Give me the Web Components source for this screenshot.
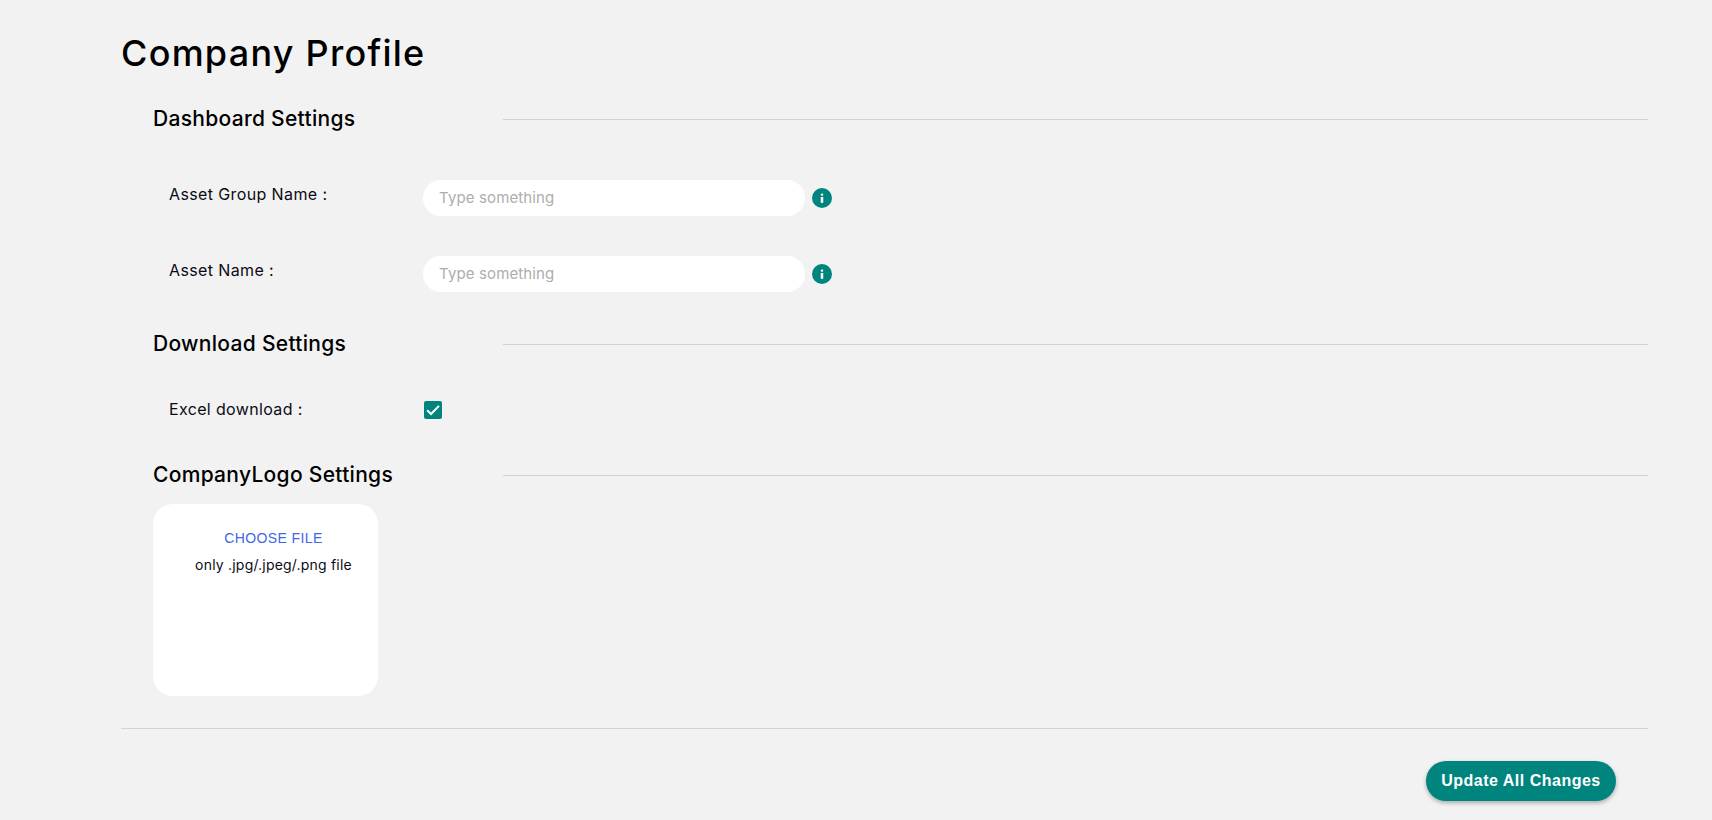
<!DOCTYPE html>
<html lang="en"><head><meta charset="utf-8"><title>Company Profile</title>
<style>html,body{margin:0;background:#f2f2f2;height:100%;overflow:hidden}body{font-family:Inter,"Liberation Sans",sans-serif;color:#000}</style>
</head><body>
<profile-page>
  <span slot="title">Company Profile</span>
  <section-head>Dashboard Settings</section-head>
  <div style="display:block;padding-top:42px">
    <text-field label="Asset Group Name :"></text-field>
    <text-field label="Asset Name :" style="margin-top:40px"></text-field>
  </div>
  <section-head style="margin-top:31px">Download Settings</section-head>
  <check-field label="Excel download :" style="margin-top:32px"></check-field>
  <section-head style="margin-top:31px">CompanyLogo Settings</section-head>
  <logo-upload style="margin-top:10px"></logo-upload>
  <action-button slot="footer">Update All Changes</action-button>
</profile-page>
<script>
const def=(name,html)=>{customElements.define(name,class extends HTMLElement{
  constructor(){super();const r=this.attachShadow({mode:'open'});r.innerHTML=html;}
  connectedCallback(){const l=this.getAttribute('label');if(l!==null){this.shadowRoot.querySelector('.label').textContent=l;}}
});};
def('profile-page',`<style>
:host{display:block;box-sizing:border-box;width:1712px;height:820px;padding:0 64px 0 121px}
h1{margin:0;padding-top:29px;height:98px;box-sizing:border-box;font:500 36px/48px Inter,sans-serif;letter-spacing:1.25px;color:#000;white-space:nowrap}
.body{padding-left:32px;height:630px;box-sizing:border-box}
.footer{border-top:1px solid #d3d3d3;display:flex;justify-content:flex-end;padding:32px 32px 0 0}
</style><h1><slot name="title"></slot></h1><div class="body"><slot></slot></div><div class="footer"><slot name="footer"></slot></div>`);
def('section-head',`<style>
:host{display:flex;align-items:center;height:40px}
.t{width:350px;flex:none;font:500 21px/38px Inter,sans-serif;padding-top:2px;letter-spacing:.3px;color:#000;white-space:nowrap}
.l{flex:1;height:1px;background:#d3d3d3;margin-top:2px}
</style><div class="t"><slot></slot></div><div class="l"></div>`);
def('info-icon',`<style>:host{display:block;width:20px;height:20px;flex:none}svg{display:block}</style>
<svg width="20" height="20" viewBox="0 0 20 20"><circle cx="10" cy="10" r="10" fill="#00857e"/><rect x="8.75" y="9" width="2.5" height="5.8" fill="#fff"/><rect x="8.75" y="5.4" width="2.5" height="2.4" rx="1.1" fill="#fff"/></svg>`);
def('text-field',`<style>
:host{display:flex;align-items:flex-start;padding-left:16px;height:36px}
.label{width:254px;flex:none;font:400 16px/28px Inter,sans-serif;letter-spacing:.38px;color:#0b0b16;white-space:nowrap}
input{box-sizing:border-box;width:382px;height:36px;border:0;outline:0;border-radius:18px;background:#fff;padding:0 16px 2px;font:400 15px Inter,sans-serif;letter-spacing:.13px;margin:0}
input::placeholder{color:#adadad;opacity:1}
.i{margin:8px 0 0 7px}
</style><span class="label"></span><input type="text" placeholder="Type something" aria-label="value"><info-icon class="i"></info-icon>`);
def('check-field',`<style>
:host{display:flex;align-items:center;padding-left:16px;height:28px}
.label{width:254px;flex:none;font:400 16px/28px Inter,sans-serif;letter-spacing:.35px;color:#0b0b16;white-space:nowrap}
.box{width:18px;height:18px;border-radius:2px;background:#00857e;margin:1px 0 0 1px;display:block}
</style><span class="label"></span><svg class="box" width="18" height="18" viewBox="0 0 18 18"><path d="M3.2 9.3 7 13 15 4.9" fill="none" stroke="#fff" stroke-width="2"/></svg>`);
def('logo-upload',`<style>
:host{display:block;box-sizing:border-box;width:225px;height:192px;background:#fff;border-radius:20px;padding-top:25px;text-align:center}
.c{font:400 14px/18px "Liberation Sans",Arial,sans-serif;letter-spacing:.4px;color:#3f66e6;padding-left:16px}
.h{font:400 14px/18px Inter,sans-serif;letter-spacing:.2px;color:#0b0b16;margin-top:9px;padding-left:16px;white-space:nowrap}
</style><div class="c">CHOOSE FILE</div><div class="h">only .jpg/.jpeg/.png file</div>`);
def('action-button',`<style>
:host{display:block}
button{display:block;width:190px;height:40px;border:0;border-radius:20px;background:#00857e;color:#fff;font:700 16px/40px "Liberation Sans",Arial,sans-serif;letter-spacing:.5px;padding:0;box-shadow:0 2px 4px rgba(0,0,0,.3);white-space:nowrap}
</style><button type="button"><slot></slot></button>`);
</script>
</body></html>
